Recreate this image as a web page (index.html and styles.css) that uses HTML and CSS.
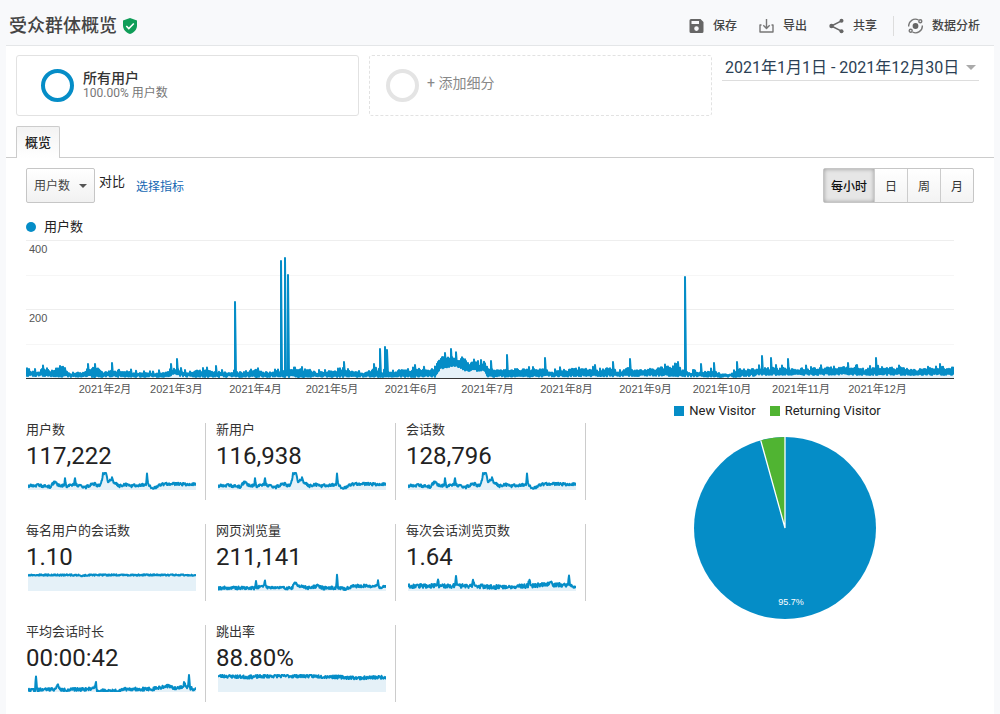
FILE: index.html
```html
<!DOCTYPE html>
<html lang="zh-CN">
<head>
<meta charset="utf-8">
<meta name="viewport" content="width=device-width, initial-scale=1">
<title>受众群体概览</title>
<link rel="stylesheet" href="styles.css">
</head>
<body>
<header class="topbar">
  <h1 class="title">受众群体概览</h1>
  <svg class="shield" viewBox="0 0 14 16" aria-hidden="true"><path d="M7 0 14 2.600V7.500C14 11.500 11 14.800 7 16 3 14.800 0 11.500 0 7.500V2.600Z" fill="#0f9d58"/><path d="m3.300 8 2.500 2.500 5-5" fill="none" stroke="#fff" stroke-width="1.600"/></svg>
  <nav class="tools">
    <button class="tool" type="button">
      <svg class="icon" viewBox="0 0 16 16" aria-hidden="true"><path fill="#666" fill-rule="evenodd" d="M2 1H11.500L14.500 4v9.500A1.500 1.500 0 0 1 13 15H2A1.500 1.500 0 0 1 .5 13.500V2.500A1.500 1.500 0 0 1 2 1ZM2.500 3v3h7.500V3ZM7.500 8.300a2.300 2.300 0 1 0 0 4.600 2.300 2.300 0 0 0 0-4.600Z"/></svg>保存</button>
    <button class="tool" type="button">
      <svg class="icon" viewBox="0 0 16 16" aria-hidden="true"><g fill="none" stroke="#777" stroke-width="1.400"><path d="M7.500 1v9.300M4.300 7.200l3.200 3.200 3.200-3.200M2.500 7H1v7h13V7h-1.500" stroke-linejoin="round"/></g></svg>导出</button>
    <button class="tool" type="button">
      <svg class="icon" viewBox="0 0 16 16" aria-hidden="true"><path d="M12.500 2.800 2.300 8 12.500 13.200" fill="none" stroke="#666" stroke-width="1.500"/><g fill="#666"><circle cx="12.500" cy="2.800" r="2"/><circle cx="2.500" cy="8" r="2.200"/><circle cx="12.500" cy="13.200" r="2"/></g></svg>共享</button>
    <span class="divider"></span>
    <button class="tool" type="button">
      <svg class="icon" viewBox="0 0 16 16" aria-hidden="true"><circle cx="7.500" cy="8" r="2.900" fill="#666"/><g fill="none" stroke="#777" stroke-width="1.400"><path d="M.7 8.500A6.700 6.700 0 0 1 10.500 2M14.300 7.500A6.700 6.700 0 0 1 4.500 14"/><circle cx="12.300" cy="3.200" r="1.500"/><circle cx="2.700" cy="12.800" r="1.500"/></g></svg>数据分析</button>
  </nav>
</header>

<main class="panel">
  <section class="segments">
    <button class="segment" type="button">
      <span class="ring"></span>
      <span class="segment-text"><strong class="segment-name">所有用户</strong><span class="segment-share">100.00% 用户数</span></span>
    </button>
    <button class="segment segment-add" type="button">
      <span class="ring ring-empty"></span><span class="add-label">+ 添加细分</span>
    </button>
    <button class="dates" type="button"><span>2021年1月1日 - 2021年12月30日</span><span class="caret"></span></button>
  </section>

  <div class="tabs"><button class="tab" type="button">概览</button></div>

  <div class="report">
    <div class="controls">
      <div class="picker">
        <select class="metric-select" aria-label="指标"><option>用户数</option></select>
        <span class="picker-caret"></span>
      </div>
      <span class="versus">对比</span>
      <a class="choose" href="#">选择指标</a>
      <div class="periods">
        <button class="period period-on" type="button">每小时</button><button class="period" type="button">日</button><button class="period" type="button">周</button><button class="period" type="button">月</button>
      </div>
    </div>

    <section class="timeline">
      <div class="legend"><span class="dot"></span>用户数</div>
      <div class="plot">
        <div class="scale"><span>400</span><span></span><span>200</span><span></span></div>
        <svg id="hourly" class="series" viewBox="0 0 928 138" preserveAspectRatio="none" role="img" aria-label="每小时用户数"></svg>
      </div>
      <div class="months">
        <span></span><span class="month">2021年2月</span><span class="month">2021年3月</span><span class="month">2021年4月</span><span class="month">2021年5月</span><span class="month">2021年6月</span><span class="month">2021年7月</span><span class="month">2021年8月</span><span class="month">2021年9月</span><span class="month">2021年10月</span><span class="month">2021年11月</span><span class="month">2021年12月</span>
      </div>
    </section>

    <section class="summary">
      <div class="metrics">
        <div class="metric"><div class="name">用户数</div><div class="value">117,222</div><svg class="spark" data-series="users" viewBox="0 0 168 18" preserveAspectRatio="none"></svg></div>
        <div class="metric"><div class="name">新用户</div><div class="value">116,938</div><svg class="spark" data-series="users" viewBox="0 0 168 18" preserveAspectRatio="none"></svg></div>
        <div class="metric"><div class="name">会话数</div><div class="value">128,796</div><svg class="spark" data-series="users" viewBox="0 0 168 18" preserveAspectRatio="none"></svg></div>
        <div class="metric"><div class="name">每名用户的会话数</div><div class="value">1.10</div><svg class="spark" data-series="perUser" viewBox="0 0 168 18" preserveAspectRatio="none"></svg></div>
        <div class="metric"><div class="name">网页浏览量</div><div class="value">211,141</div><svg class="spark" data-series="views" viewBox="0 0 168 18" preserveAspectRatio="none"></svg></div>
        <div class="metric"><div class="name">每次会话浏览页数</div><div class="value">1.64</div><svg class="spark" data-series="pages" viewBox="0 0 168 18" preserveAspectRatio="none"></svg></div>
        <div class="metric"><div class="name">平均会话时长</div><div class="value">00:00:42</div><svg class="spark" data-series="duration" viewBox="0 0 168 18" preserveAspectRatio="none"></svg></div>
        <div class="metric"><div class="name">跳出率</div><div class="value">88.80%</div><svg class="spark" data-series="bounce" viewBox="0 0 168 18" preserveAspectRatio="none"></svg></div>
      </div>
      <div class="visitors">
        <div class="visitor-legend"><span class="key"><span class="swatch"></span>New Visitor</span><span class="key"><span class="swatch swatch-green"></span>Returning Visitor</span></div>
        <svg class="pie" viewBox="-92 -92 184 184" role="img" aria-label="New Visitor 95.7%">
          <circle r="91" fill="#058dc7"/>
          <path d="M0 0-24.300-87.700A91 91 0 0 1 0-91Z" fill="#50b432"/>
          <path d="M-24.300-87.700 0 0V-91" fill="none" stroke="#fff" stroke-width="1.300"/>
          <text class="pie-label" x="6" y="77" text-anchor="middle">95.7%</text>
        </svg>
      </div>
    </section>
  </div>
</main>
<script src="charts.js"></script>
</body>
</html>
```
FILE: styles.css
```css
* { box-sizing: border-box; }
body {
  margin: 0;
  background: #f8f9fb;
  color: #222;
  font-family: Roboto, "Noto Sans CJK SC", sans-serif;
  font-size: 13px;
}
button { margin: 0; padding: 0; border: 0; background: none; color: inherit; font: inherit; cursor: pointer; }

.topbar { display: flex; align-items: center; height: 45px; padding: 6px 20px 0 9px; }
.title { margin: 0; color: #444; font-size: 18px; font-weight: 500; line-height: 24px; }
.shield { width: 14px; height: 16px; margin-left: 6px; }
.tools { display: flex; align-items: center; gap: 22px; margin-left: auto; }
.tool { display: flex; align-items: center; gap: 8px; color: #444; font-size: 12px; font-weight: 500; line-height: 18px; }
.icon { width: 16px; height: 16px; }
.divider { width: 1px; height: 20px; margin: 0 -8px 0 -6px; background: #ddd; }

.panel { min-height: calc(100vh - 45px); margin: 0 6px; border-top: 1px solid #e4e6e8; background: #fff; }
.segments { display: grid; grid-template-columns: 343fr 343fr 257fr; gap: 10px; align-items: start; padding: 9px 15px 10px 10px; }
.segment { display: flex; align-items: center; height: 61px; padding-left: 24px; border: 1px solid #e2e2e2; border-radius: 3px; text-align: left; }
.segment-add { padding-left: 16px; border-style: dashed; }
.ring { width: 33px; height: 33px; border: 4px solid #058dc7; border-radius: 50%; }
.ring-empty { border-color: #e4e4e4; }
.segment-text { display: flex; flex-direction: column; margin-left: 9px; }
.segment-name { color: #333; font-size: 14px; font-weight: 500; line-height: 15px; }
.segment-share { color: #777; font-size: 12px; line-height: 15px; }
.add-label { margin-left: 8px; padding-bottom: 7px; color: #888; font-size: 14px; }
.dates { display: flex; align-items: center; gap: 7px; height: 26px; padding: 0 0 3px 3px; border-bottom: 1px solid #ddd; color: #2b3f54; font-size: 16px; white-space: nowrap; }
.caret { margin-top: 3px; border: 5px solid transparent; border-top-color: #aaa; border-bottom: 0; }

.tabs { display: flex; padding-left: 10px; border-bottom: 1px solid #ccc; }
.tab { height: 32px; margin-bottom: -1px; padding: 0 8px 2px; border: 1px solid #ccc; border-bottom: 0; border-radius: 2px 2px 0 0; background: linear-gradient(#f3f3f3, #fff); font-size: 13px; font-weight: 500; }

.report { padding: 10px 20px 0; }
.controls { display: flex; align-items: center; height: 35px; }
.picker { display: grid; align-items: center; height: 35px; }
.metric-select { grid-area: 1 / 1; height: 35px; padding: 0 23px 0 7px; border: 1px solid #c6c6c6; border-radius: 2px; background: linear-gradient(#fff, #f1f1f1); color: #444; font: inherit; font-size: 12px; appearance: none; }
.picker-caret { grid-area: 1 / 1; justify-self: end; margin-right: 8px; border: 4px solid transparent; border-top-color: #555; border-bottom: 0; pointer-events: none; }
.versus { margin: 0 11px 8px 4px; line-height: 18px; }
.choose { color: #1467b3; font-size: 12px; text-decoration: none; }
.periods { display: flex; height: 35px; margin-left: auto; border: 1px solid #c6c6c6; border-radius: 2px; background: linear-gradient(#fff, #f3f3f3); }
.period { min-width: 33px; padding: 0 10px; color: #333; font-size: 12px; }
.period + .period { border-left: 1px solid #ccc; }
.period-on { padding: 0 7px; background: #e6e6e6; box-shadow: inset 0 0 4px #999; color: #111; font-weight: 500; }

.timeline { padding-right: 20px; }
.legend { display: flex; align-items: center; gap: 8px; height: 24px; margin-top: 12px; line-height: 20px; }
.dot { width: 10px; height: 10px; border-radius: 50%; background: #058dc7; }
.plot { display: grid; height: 139px; margin-top: 1px; border-bottom: 1px solid #333; }
.scale { grid-area: 1 / 1; display: grid; grid-template-rows: repeat(4, 1fr); color: #555; font: 11px/16px "Liberation Sans", sans-serif; }
.scale span { padding-left: 3px; border-top: 1px solid #eee; }
.scale span:nth-child(even) { border-color: #f6f6f6; }
.series { grid-area: 1 / 1; width: 100%; height: 138px; }
.area { fill: #e5f1f8; }
.line { fill: none; stroke: #058dc7; stroke-width: 2; stroke-linejoin: round; vector-effect: non-scaling-stroke; }
.months { display: grid; grid-template-columns: 31fr 28fr 31fr 30fr 31fr 30fr 31fr 31fr 30fr 31fr 30fr 30fr; height: 21px; color: #555; font: 11px/21px "Liberation Sans", "Noto Sans CJK SC", sans-serif; }
.month { display: flex; justify-content: center; width: 0; white-space: nowrap; }

.summary { display: grid; grid-template-columns: 570fr 378fr; }
.metrics { display: grid; grid-template-columns: repeat(3, 1fr); gap: 24px 0; align-content: start; padding-top: 23px; }
.metric { height: 77px; margin-right: 10px; padding-right: 9px; border-right: 1px solid #ccc; }
.name { color: #333; line-height: 14px; }
.value { padding-top: 3px; font-size: 24px; line-height: 32px; }
.spark { display: block; width: calc(100% - 2px); height: 18px; margin-left: 2px; }
.visitors { display: flex; flex-direction: column; align-items: center; }
.visitor-legend { display: flex; gap: 14px; height: 22px; padding-right: 15px; line-height: 22px; }
.key { display: flex; align-items: center; gap: 5px; }
.swatch { width: 10px; height: 10px; background: #058dc7; }
.swatch-green { background: #50b432; }
.pie { width: 184px; height: 184px; margin-top: 14px; }
.pie-label { fill: #fff; font: 9px "Liberation Sans", sans-serif; }
```
FILE: charts.js
```js
// Seeded generator so that the series are the same on every load.
function generator(seed) {
  return function () {
    seed = (seed * 1664525 + 1013904223) % 4294967296;
    return seed / 4294967296;
  };
}

// Linear interpolation through [x, height] pairs.
function level(points, x) {
  for (let i = 1; i < points.length; i++) {
    const [x0, y0] = points[i - 1];
    const [x1, y1] = points[i];
    if (x <= x1) return y0 + (y1 - y0) * (x - x0) / (x1 - x0);
  }
  return points[points.length - 1][1];
}

function draw(svg, coords, width, height) {
  const line = coords.map(([x, h]) => x + ' ' + (height - h).toFixed(1)).join('L');
  svg.innerHTML = '<path class="area" d="M0 ' + height + 'L' + line + 'L' + width + ' ' + height + 'Z"/>' +
    '<path class="line" d="M' + line + '"/>';
}

const hourlyTop = [[0,7],[14,7],[17,12],[22,9],[26,6],[29,9],[34,12],[38,11],[41,5],[59,6],[62,10],[69,10],[74,8],[77,5],[86,8],[99,7],[114,5],[137,5],[142,8],[148,10],[154,8],[159,5],[170,8],[190,7],[196,6],[214,6],[229,9],[236,6],[267,8],[279,9],[290,6],[312,8],[318,10],[324,7],[339,5],[348,10],[354,6],[366,6],[378,8],[389,9],[399,8],[409,9],[412,18],[414,23],[425,21],[436,22],[442,14],[452,16],[458,17],[462,9],[474,8],[490,9],[519,9],[524,6],[537,8],[554,10],[574,8],[587,10],[592,6],[604,11],[609,8],[624,8],[636,11],[652,12],[656,8],[664,5],[688,7],[696,4],[704,4],[711,7],[719,8],[739,10],[762,10],[769,9],[784,10],[799,10],[822,11],[839,9],[850,10],[874,10],[889,8],[914,11],[928,10]];
const hourlyLow = [[0,2],[41,1],[140,1],[148,3],[160,1],[409,1],[414,9],[430,12],[440,7],[458,7],[462,1],[640,2],[690,1],[710,1],[740,3],[928,3]];
const hourlyPeaks = {62:14,69:14,86:15,145:14,151:19,190:12,209:76,255:117,259:120,262:103,318:16,348:14,354:29,359:31,361:28,389:13,419:25,425:29,455:18,465:17,481:23,519:20,569:13,587:16,604:19,652:16,659:101,675:14,688:15,711:16,736:22,745:20,762:19,822:15,850:20,914:14};
const random = generator(7);
const hourly = [];
for (let x = 0; x <= 928; x++) {
  const top = level(hourlyTop, x);
  const low = level(hourlyLow, x);
  const burst = random() > 0.9 ? 3 : 0;
  hourly.push([x, Math.min(top, low + random() * 2)]);
  hourly.push([x, hourlyPeaks[x] || top * (0.75 + random() * 0.35) + burst - 0.5]);
}
draw(document.getElementById('hourly'), hourly, 928, 138);

const sparks = {
  users: { noise: 1.5, points: [[0,4],[6,5],[14,4],[22,3],[26,8],[30,5],[36,4],[37,12],[38,4],[46,5],[47,13],[48,5],[58,3],[63,5],[67,6],[69,4],[72,5],[74,9],[75,17],[78,17],[80,9],[83,9],[84,12],[86,7],[92,4],[97,6],[102,4],[112,5],[118,6],[119,15],[120,6],[123,3],[126,2],[128,3],[135,6],[168,6]] },
  perUser: { noise: 0.7, points: [[0,16],[50,16],[54,15],[60,16],[168,16]] },
  views: { noise: 1.5, points: [[0,3],[20,3],[37,3],[38,9],[39,4],[46,5],[47,11],[48,4],[66,3],[74,3],[77,8],[82,5],[90,3],[100,5],[105,3],[118,3],[119,16],[120,3],[127,2],[135,5],[159,5],[160,10],[161,4],[168,4]] },
  pages: { noise: 2, points: [[0,5],[29,5],[30,12],[31,5],[47,5],[48,14],[49,5],[64,5],[65,12],[67,5],[85,4],[120,5],[121,11],[123,5],[140,7],[142,9],[146,6],[160,6],[161,17],[162,5],[168,5]] },
  duration: { noise: 1.6, points: [[0,2],[7,2],[8,17],[9,2],[28,3],[30,8],[32,2],[62,3],[67,5],[68,9],[69,2],[70,1],[90,1],[94,3],[125,3],[140,6],[145,4],[155,5],[156,10],[158,4],[160,5],[161,16],[162,4],[168,2]] },
  bounce: { noise: 1.6, points: [[0,16],[30,15],[55,16],[90,16],[120,15],[140,14],[168,15]] }
};
document.querySelectorAll('.spark').forEach(function (svg, index) {
  const series = sparks[svg.dataset.series];
  const next = generator(series.noise * 10 + (index > 2 ? index : 0));
  const coords = [];
  for (let x = 0; x <= 168; x += 0.5) {
    const h = level(series.points, x) + (next() * 2 - 1) * series.noise;
    coords.push([x, Math.max(0.8, Math.min(17, h))]);
  }
  draw(svg, coords, 168, 18);
});
```
